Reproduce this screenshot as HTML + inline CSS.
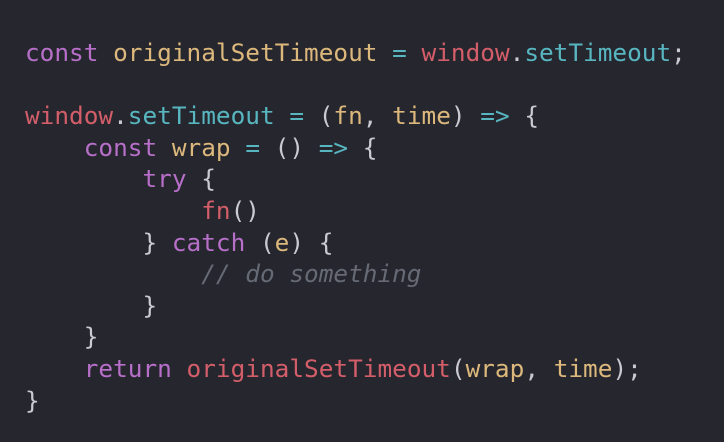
<!DOCTYPE html>
<html><head><style>
html,body{margin:0;padding:0;background:#26272e;width:724px;height:442px;overflow:hidden}
pre{margin:0;position:absolute;left:25px;top:37px;font-family:"DejaVu Sans Mono","Liberation Mono",monospace;font-size:24.4px;line-height:31.6px;color:#c9cbd1}
.k{color:#b76fc9}.y{color:#dcb87c}.r{color:#d35e6a}.c{color:#58b6c0}.g{color:#666a75;font-style:italic}
</style></head><body>
<pre><span class="k">const</span> <span class="y">originalSetTimeout</span> <span class="c">=</span> <span class="r">window</span>.<span class="c">setTimeout</span>;

<span class="r">window</span>.<span class="c">setTimeout</span> <span class="c">=</span> (<span class="y">fn</span>, <span class="y">time</span>) <span class="c">=&gt;</span> {
    <span class="k">const</span> <span class="y">wrap</span> <span class="c">=</span> () <span class="c">=&gt;</span> {
        <span class="k">try</span> {
            <span class="r">fn</span>()
        } <span class="k">catch</span> (<span class="y">e</span>) {
            <span class="g">// do something</span>
        }
    }
    <span class="k">return</span> <span class="r">originalSetTimeout</span>(<span class="y">wrap</span>, <span class="y">time</span>);
}</pre>
</body></html>
